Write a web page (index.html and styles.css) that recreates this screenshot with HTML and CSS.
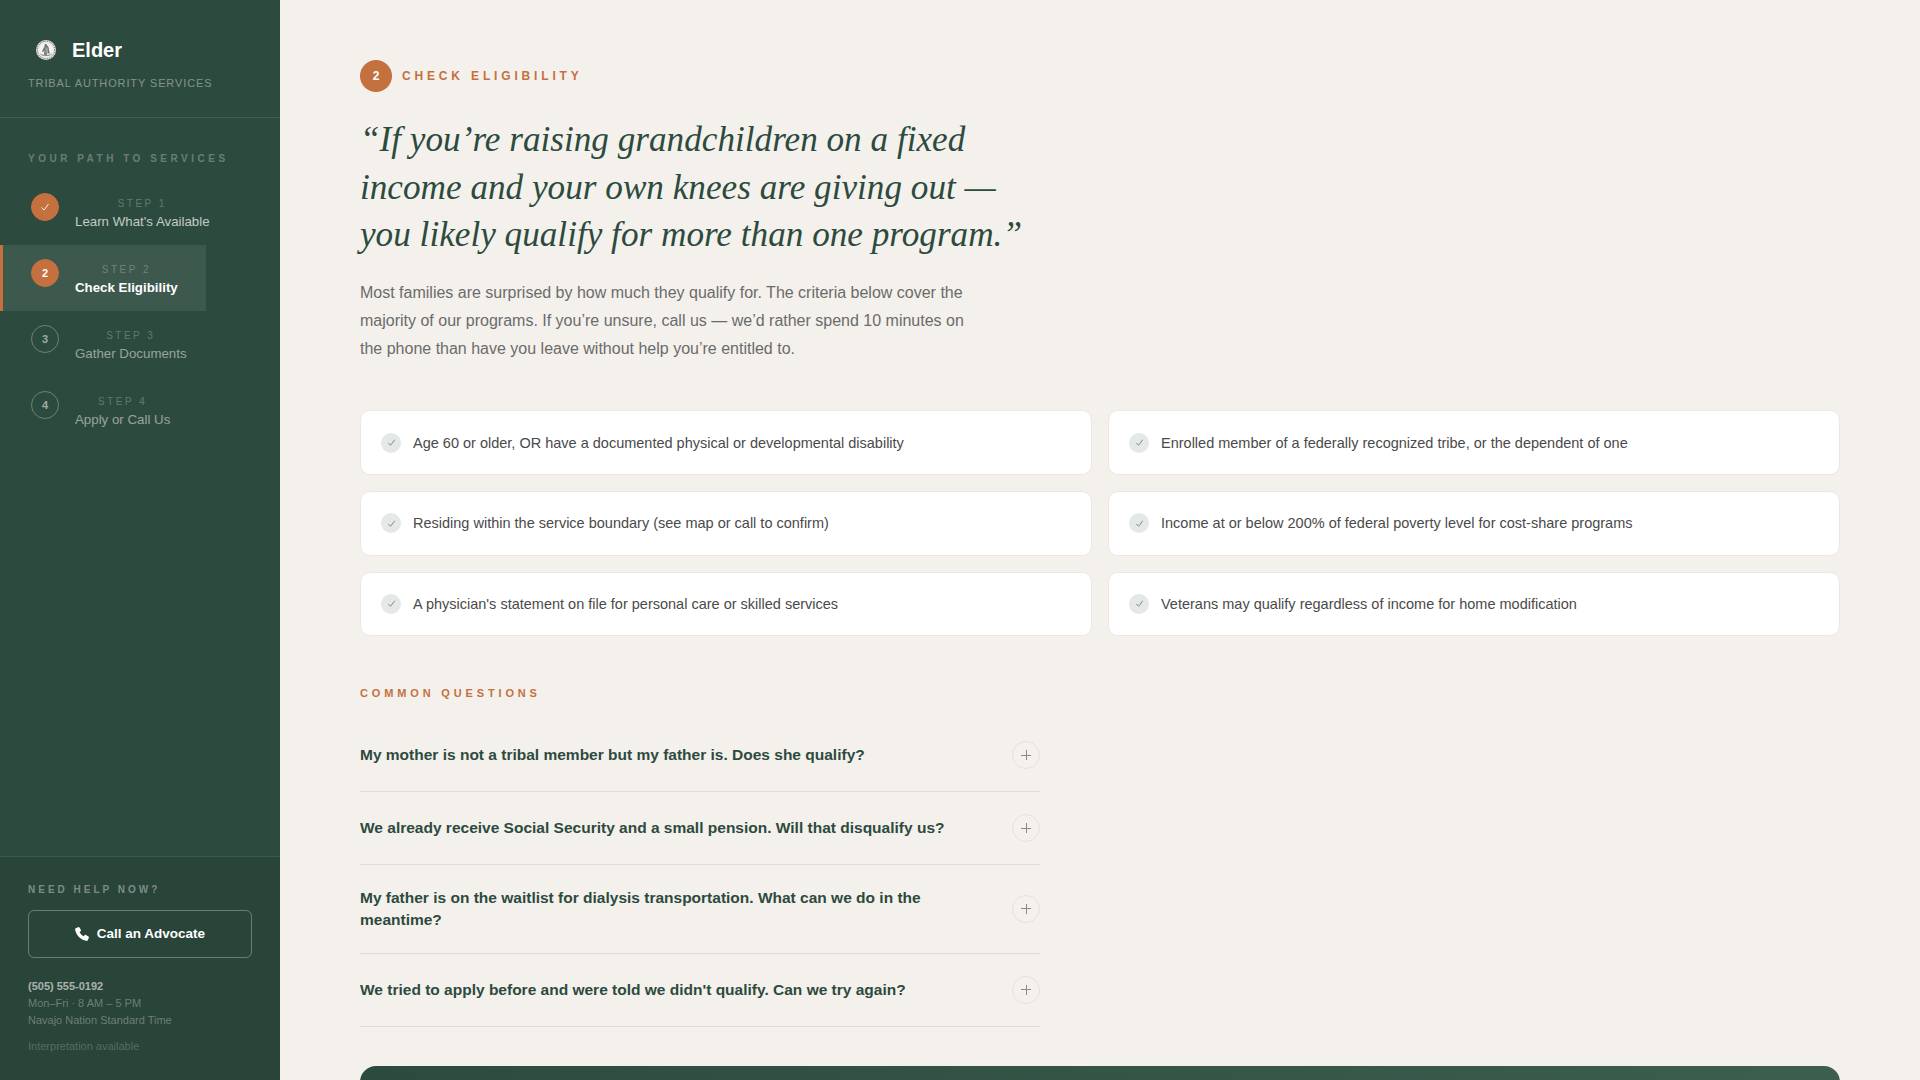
FILE: index.html
```html
<!DOCTYPE html>
<html lang="en">
<head>
<meta charset="utf-8">
<title>Elder – Check Eligibility</title>
<link rel="stylesheet" href="styles.css">
</head>
<body>
<div class="app">
  <aside class="sidebar">
    <div class="brand">
      <div class="brand-row">
        <svg class="seal" viewBox="0 0 22 22" aria-hidden="true">
          <circle cx="11" cy="11" r="11" fill="#e4e3dc"/>
          <circle cx="11" cy="11" r="9.6" fill="none" stroke="#55645c" stroke-width="1.1" stroke-dasharray="1 1.1"/>
          <circle cx="11" cy="11" r="8" fill="#f4f3ee"/>
          <path d="M9.5 4.6c1.4-.8 2.9.1 2.9 1.7 1.3.8 2 2.5 1.8 4.6l1 3.6-1.7.6-.7-2.6-.6 3.6H8.7l.5-4.8-1.6 2-1.1-.7 2-3.8c.2-1.2.6-2 1.3-2.5-.5-.5-.6-1.1-.3-1.7z" fill="#6a766f"/>
          <path d="M11 7.5v7M12.4 9l-.3 4" fill="none" stroke="#e8e7e1" stroke-width=".6"/>
          <path d="M4.8 15.4c3 2.4 9.4 2.4 12.4 0" fill="none" stroke="#6a766f" stroke-width="1"/>
        </svg>
        <span class="brand-name">Elder</span>
      </div>
      <div class="brand-tag">Tribal Authority Services</div>
    </div>
    <nav class="steps">
      <div class="steps-title">Your Path to Services</div>
      <div class="step">
        <span class="step-dot dot-done">
          <svg viewBox="0 0 12 12" class="dot-check" aria-hidden="true"><path d="M2.5 6.5 5 9l4.5-6" fill="none" stroke="#fff" stroke-width=".9"/></svg>
        </span>
        <span class="step-text"><span class="step-num">Step 1</span><span class="step-label label-done">Learn What's Available</span></span>
      </div>
      <div class="step step-active">
        <span class="step-dot dot-current">2</span>
        <span class="step-text"><span class="step-num">Step 2</span><span class="step-label label-current">Check Eligibility</span></span>
      </div>
      <div class="step">
        <span class="step-dot">3</span>
        <span class="step-text"><span class="step-num">Step 3</span><span class="step-label">Gather Documents</span></span>
      </div>
      <div class="step">
        <span class="step-dot">4</span>
        <span class="step-text"><span class="step-num">Step 4</span><span class="step-label">Apply or Call Us</span></span>
      </div>
    </nav>
    <div class="help">
      <div class="help-title">Need Help Now?</div>
      <button class="call-btn" type="button">
        <svg viewBox="2 2 20 20" class="phone" aria-hidden="true"><path d="M6.6 2.2 3.4 3.6C2.5 4 2 5 2.2 6c1.6 8 7.8 14.2 15.8 15.8 1 .2 2-.3 2.4-1.2l1.4-3.2c.3-.7 0-1.4-.6-1.8l-3.6-2.2c-.6-.4-1.4-.3-1.9.3l-1.3 1.6c-2.6-1.3-4.7-3.4-6-6l1.6-1.3c.6-.5.7-1.3.3-1.9L8.4 2.8c-.4-.6-1.1-.9-1.8-.6z" fill="#fff"/></svg>
        Call an Advocate
      </button>
      <div class="help-phone">(505) 555-0192</div>
      <div class="help-line">Mon–Fri · 8 AM – 5 PM</div>
      <div class="help-line">Navajo Nation Standard Time</div>
      <div class="help-note">Interpretation available</div>
    </div>
  </aside>
  <main class="main">
    <div class="eyebrow"><span class="eyebrow-dot">2</span><span class="eyebrow-text">Check Eligibility</span></div>
    <h1 class="quote">“If you’re raising grandchildren on a fixed<br>income and your own knees are giving out —<br>you likely qualify for more than one program.”</h1>
    <p class="lede">Most families are surprised by how much they qualify for. The criteria below cover the majority of our programs. If you’re unsure, call us — we’d rather spend 10 minutes on the phone than have you leave without help you’re entitled to.</p>
    <div class="criteria">
      <div class="card"><span class="tick"><svg viewBox="0 0 12 12" aria-hidden="true"><path d="M2.5 6.5 5 9l4.5-6"/></svg></span>Age 60 or older, OR have a documented physical or developmental disability</div>
      <div class="card"><span class="tick"><svg viewBox="0 0 12 12" aria-hidden="true"><path d="M2.5 6.5 5 9l4.5-6"/></svg></span>Enrolled member of a federally recognized tribe, or the dependent of one</div>
      <div class="card"><span class="tick"><svg viewBox="0 0 12 12" aria-hidden="true"><path d="M2.5 6.5 5 9l4.5-6"/></svg></span>Residing within the service boundary (see map or call to confirm)</div>
      <div class="card"><span class="tick"><svg viewBox="0 0 12 12" aria-hidden="true"><path d="M2.5 6.5 5 9l4.5-6"/></svg></span>Income at or below 200% of federal poverty level for cost-share programs</div>
      <div class="card"><span class="tick"><svg viewBox="0 0 12 12" aria-hidden="true"><path d="M2.5 6.5 5 9l4.5-6"/></svg></span>A physician's statement on file for personal care or skilled services</div>
      <div class="card"><span class="tick"><svg viewBox="0 0 12 12" aria-hidden="true"><path d="M2.5 6.5 5 9l4.5-6"/></svg></span>Veterans may qualify regardless of income for home modification</div>
    </div>
    <div class="faq-title">Common Questions</div>
    <div class="faq">
      <div class="faq-row"><span>My mother is not a tribal member but my father is. Does she qualify?</span><span class="plus"></span></div>
      <div class="faq-row"><span>We already receive Social Security and a small pension. Will that disqualify us?</span><span class="plus"></span></div>
      <div class="faq-row"><span>My father is on the waitlist for dialysis transportation. What can we do in the meantime?</span><span class="plus"></span></div>
      <div class="faq-row"><span>We tried to apply before and were told we didn't qualify. Can we try again?</span><span class="plus"></span></div>
    </div>
    <div class="cta"></div>
  </main>
</div>
</body>
</html>
```
FILE: styles.css
```css
* { box-sizing: border-box; }
html, body { margin: 0; height: 100%; overflow: hidden; }
body { font-family: "Liberation Sans", Arial, sans-serif; background: #f4f1ec; color: #2d4a3e; }
.app { display: flex; height: 100vh; }

.sidebar { width: 280px; flex: none; background: #2d4a3e; display: flex; flex-direction: column; }
.brand { padding: 36px 28px 27px; border-bottom: 1px solid rgba(255,255,255,.1); }
.brand-row { display: flex; align-items: center; gap: 16px; padding-left: 8px; height: 28px; }
.seal { width: 20px; height: 20px; flex: none; }
.brand-name { font-size: 20px; font-weight: 700; color: #fff; }
.brand-tag { margin-top: 13px; font-size: 11px; letter-spacing: .08em; text-transform: uppercase; color: rgba(255,255,255,.42); line-height: 13px; }

.steps { flex: 1; padding-top: 34px; display: flex; flex-direction: column; align-items: flex-start; }
.steps-title { padding-left: 28px; margin-bottom: 13px; font-size: 10px; font-weight: 700; letter-spacing: .35em; text-transform: uppercase; color: rgba(255,255,255,.3); line-height: 14px; }
.step { display: inline-flex; align-items: flex-start; gap: 16px; padding: 14px 28px 0 31px; height: 66px; }
.step-active { background: rgba(255,255,255,.08); border-left: 3px solid #c4703f; padding-left: 28px; }
.step-dot { width: 28px; height: 28px; flex: none; border-radius: 50%; border: 1px solid rgba(255,255,255,.3); display: flex; align-items: center; justify-content: center; font-size: 11px; font-weight: 700; color: rgba(255,255,255,.55); }
.dot-done, .dot-current { background: #c4703f; border-color: #c4703f; color: #fff; }
.dot-check { width: 12px; height: 12px; }
.step-text { display: flex; flex-direction: column; align-items: center; }
.step-num { font-size: 10px; letter-spacing: .25em; text-transform: uppercase; color: rgba(255,255,255,.27); line-height: 14px; margin-top: 4px; }
.step-label { font-size: 13.3px; color: rgba(255,255,255,.5); line-height: 18px; margin-top: 2px; }
.label-done { color: rgba(255,255,255,.72); }
.label-current { color: #fff; font-weight: 700; }

.help { padding: 26px 28px 20px; background: rgba(0,0,0,.08); border-top: 1px solid rgba(255,255,255,.1); height: 224px; }
.help-title { font-size: 10px; font-weight: 700; letter-spacing: .3em; text-transform: uppercase; color: rgba(255,255,255,.4); line-height: 14px; }
.call-btn { margin-top: 13px; width: 100%; height: 48px; display: flex; align-items: center; justify-content: center; gap: 8px; background: transparent; border: 1px solid rgba(255,255,255,.3); border-radius: 6px; color: #fff; font: 700 13.5px/16px "Liberation Sans", Arial, sans-serif; padding: 0; }
.phone { width: 14px; height: 14px; }
.help-phone { margin-top: 20px; font-size: 11px; font-weight: 700; color: rgba(255,255,255,.6); line-height: 17px; }
.help-line { font-size: 11px; color: rgba(255,255,255,.33); line-height: 17px; }
.help-note { margin-top: 9px; font-size: 11px; color: rgba(255,255,255,.22); line-height: 17px; }

.main { flex: 1; padding: 60px 80px 0; min-width: 0; overflow: hidden; }
.eyebrow { display: flex; align-items: center; gap: 10px; }
.eyebrow-dot { width: 32px; height: 32px; border-radius: 50%; background: #c4703f; color: #fff; font-size: 12px; font-weight: 700; display: flex; align-items: center; justify-content: center; }
.eyebrow-text { font-size: 12px; font-weight: 700; letter-spacing: .32em; text-transform: uppercase; color: #c4703f; }
.quote { margin: 24px 0 0; font-family: "Liberation Serif", "Times New Roman", serif; font-style: italic; font-weight: 400; font-size: 35.2px; line-height: 47.6px; color: #2d4a3e; white-space: nowrap; }
.lede { margin: 20.6px 0 0; width: 620px; font-size: 16px; line-height: 28px; color: #6b6b6b; }

.criteria { margin-top: 47px; display: grid; grid-template-columns: 1fr 1fr; gap: 16px; }
.card { height: 64.6px; display: flex; align-items: center; gap: 12px; padding: 0 20px; background: #fff; border: 1px solid #ebe8e3; border-radius: 10px; font-size: 14.5px; color: #4a4a4a; }
.tick { width: 20px; height: 20px; flex: none; border-radius: 50%; background: #e4e8e6; display: flex; align-items: center; justify-content: center; }
.tick svg { width: 11px; height: 11px; fill: none; stroke: #74847c; stroke-width: 1; }

.faq-title { margin-top: 50px; font-size: 11px; font-weight: 700; letter-spacing: .35em; text-transform: uppercase; color: #c4703f; line-height: 14px; }
.faq { margin-top: 19px; width: 680px; }
.faq-row { display: flex; align-items: center; justify-content: space-between; gap: 40px; padding: 22px 0; border-bottom: 1px solid #e0dcd5; font-size: 15.5px; font-weight: 700; line-height: 21.7px; color: #2d4a3e; }
.plus { position: relative; width: 28px; height: 28px; flex: none; border-radius: 50%; border: 1px solid #e5e2dc; }
.plus::before, .plus::after { content: ""; position: absolute; left: 50%; top: 50%; background: #8a8a85; }
.plus::before { width: 10px; height: 1px; margin: -.5px 0 0 -5px; }
.plus::after { width: 1px; height: 10px; margin: -5px 0 0 -.5px; }

.cta { margin-top: 39px; height: 120px; background: linear-gradient(135deg, #2d4a3e, #3d6050); border-radius: 16px; }
```
